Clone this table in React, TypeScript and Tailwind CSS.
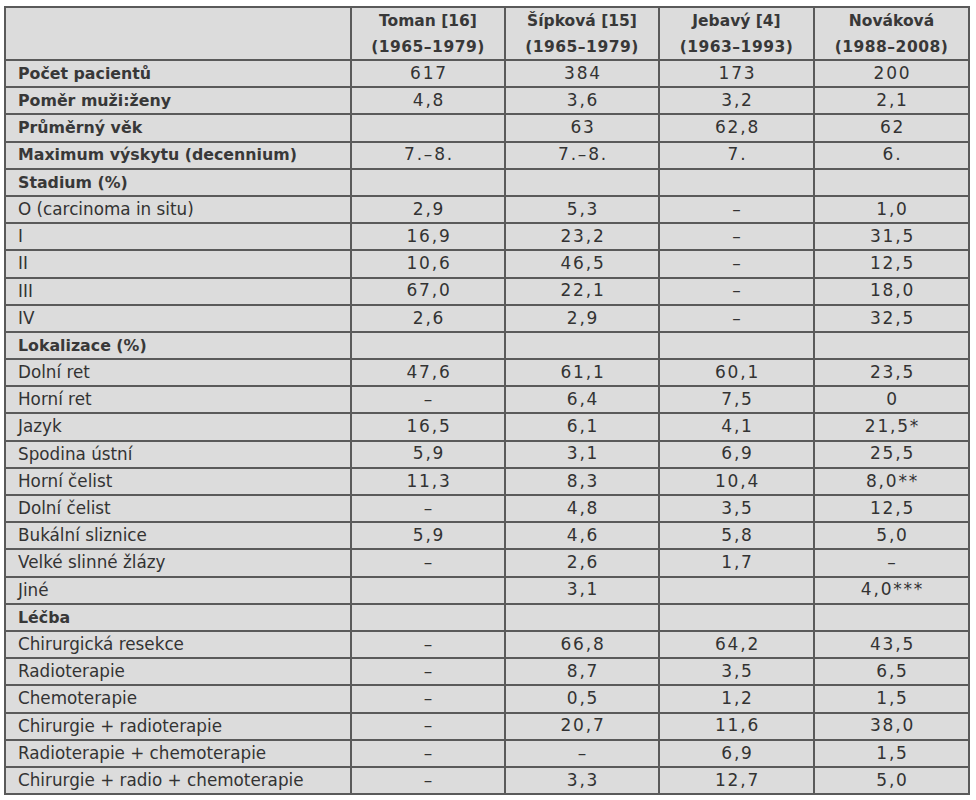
import React from "react";

type Row = { label: string; bold?: boolean; vals: string[] };

const rows: Row[] = [
  { label: "Počet pacientů", bold: true, vals: ["617", "384", "173", "200"] },
  { label: "Poměr muži:ženy", bold: true, vals: ["4,8", "3,6", "3,2", "2,1"] },
  { label: "Průměrný věk", bold: true, vals: ["", "63", "62,8", "62"] },
  { label: "Maximum výskytu (decennium)", bold: true, vals: ["7.–8.", "7.–8.", "7.", "6."] },
  { label: "Stadium (%)", bold: true, vals: ["", "", "", ""] },
  { label: "O (carcinoma in situ)", vals: ["2,9", "5,3", "–", "1,0"] },
  { label: "I", vals: ["16,9", "23,2", "–", "31,5"] },
  { label: "II", vals: ["10,6", "46,5", "–", "12,5"] },
  { label: "III", vals: ["67,0", "22,1", "–", "18,0"] },
  { label: "IV", vals: ["2,6", "2,9", "–", "32,5"] },
  { label: "Lokalizace (%)", bold: true, vals: ["", "", "", ""] },
  { label: "Dolní ret", vals: ["47,6", "61,1", "60,1", "23,5"] },
  { label: "Horní ret", vals: ["–", "6,4", "7,5", "0"] },
  { label: "Jazyk", vals: ["16,5", "6,1", "4,1", "21,5*"] },
  { label: "Spodina ústní", vals: ["5,9", "3,1", "6,9", "25,5"] },
  { label: "Horní čelist", vals: ["11,3", "8,3", "10,4", "8,0**"] },
  { label: "Dolní čelist", vals: ["–", "4,8", "3,5", "12,5"] },
  { label: "Bukální sliznice", vals: ["5,9", "4,6", "5,8", "5,0"] },
  { label: "Velké slinné žlázy", vals: ["–", "2,6", "1,7", "–"] },
  { label: "Jiné", vals: ["", "3,1", "", "4,0***"] },
  { label: "Léčba", bold: true, vals: ["", "", "", ""] },
  { label: "Chirurgická resekce", vals: ["–", "66,8", "64,2", "43,5"] },
  { label: "Radioterapie", vals: ["–", "8,7", "3,5", "6,5"] },
  { label: "Chemoterapie", vals: ["–", "0,5", "1,2", "1,5"] },
  { label: "Chirurgie + radioterapie", vals: ["–", "20,7", "11,6", "38,0"] },
  { label: "Radioterapie + chemoterapie", vals: ["–", "–", "6,9", "1,5"] },
  { label: "Chirurgie + radio + chemoterapie", vals: ["–", "3,3", "12,7", "5,0"] },
];

const headers: [string, string][] = [
  ["Toman [16]", "(1965–1979)"],
  ["Šípková [15]", "(1965–1979)"],
  ["Jebavý [4]", "(1963–1993)"],
  ["Nováková", "(1988–2008)"],
];

export default function App() {
  return (
    <div
      className="min-h-[800px] w-[976px] bg-white pl-[4px] pt-[6px] text-[#333333]"
      style={{ fontFamily: '"DejaVu Sans", "Liberation Sans", sans-serif' }}
    >
      <div className="grid w-[966px] grid-cols-[344px_152px_152px_153px_153px] gap-[2px] bg-[#5a5a5a] p-[2px]">
        <div className="h-[51px] bg-[#dcdcdc]" />
        {headers.map(([a, b]) => (
          <div
            key={a}
            className="flex h-[51px] flex-col items-center justify-center bg-[#dcdcdc] text-[15.5px] font-bold leading-[26px] text-[#383838]"
          >
            <span>{a}</span>
            <span className="tracking-[0.5px]">{b}</span>
          </div>
        ))}
        {rows.map((r) => (
          <React.Fragment key={r.label}>
            <div
              className={`flex h-[25.2px] items-center bg-[#dcdcdc] pl-3 ${
                r.bold ? "text-[15.8px] font-bold text-[#383838]" : "text-[16.8px]"
              }`}
            >
              {r.label}
            </div>
            {r.vals.map((v, i) => (
              <div
                key={i}
                className="flex h-[25.2px] items-center justify-center bg-[#dcdcdc] pl-[2px] text-[17px] tracking-[1.8px]"
              >
                {v}
              </div>
            ))}
          </React.Fragment>
        ))}
      </div>
    </div>
  );
}
